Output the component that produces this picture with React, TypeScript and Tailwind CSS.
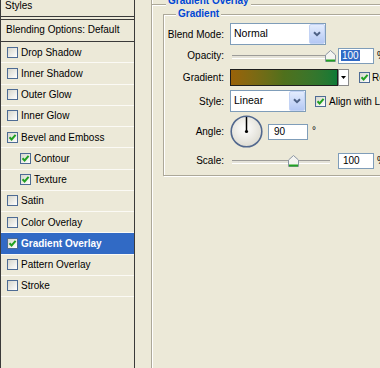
const items = [
  { name: "Drop Shadow", on: false, sub: false },
  { name: "Inner Shadow", on: false, sub: false },
  { name: "Outer Glow", on: false, sub: false },
  { name: "Inner Glow", on: false, sub: false },
  { name: "Bevel and Emboss", on: true, sub: false },
  { name: "Contour", on: true, sub: true },
  { name: "Texture", on: true, sub: true },
  { name: "Satin", on: false, sub: false },
  { name: "Color Overlay", on: false, sub: false },
  { name: "Gradient Overlay", on: true, sub: false, active: true },
  { name: "Pattern Overlay", on: false, sub: false },
  { name: "Stroke", on: false, sub: false },
];

function Check({ on }: { on: boolean }) {
  return (
    <span className="w-[11px] h-[11px] shrink-0 border border-[#4d6b94] bg-linear-to-br from-[#d6d6cc] to-white flex items-center justify-center">
      {on && (
        <svg width="9" height="9" viewBox="0 0 9 9">
          <path d="M1.5 4.2 L3.6 6.4 L7.6 1.8" stroke="#21a121" strokeWidth="2" fill="none" />
        </svg>
      )}
    </span>
  );
}

function Label({ children }: { children: React.ReactNode }) {
  return <div className="w-[60px] shrink-0 text-right mr-[6px]">{children}</div>;
}

function Select({ text, w }: { text: string; w: string }) {
  return (
    <div className={`${w} h-[22px] border border-[#7f9db9] bg-white flex items-center`}>
      <span className="flex-1 pl-[3px] text-[10.5px]">{text}</span>
      <span className="w-[16px] h-[20px] mr-[0px] rounded-[2px] border border-[#c3d3f5] bg-linear-to-b from-[#e3ecfd] to-[#b4c8f4] flex items-center justify-center">
        <svg width="8" height="6" viewBox="0 0 8 6">
          <path d="M1 1.2 L4 4.2 L7 1.2" stroke="#4d6185" strokeWidth="2" fill="none" />
        </svg>
      </span>
    </div>
  );
}

function Slider({ pos }: { pos: string }) {
  return (
    <div className="relative w-[106px] h-[12px] shrink-0">
      <div className="mt-[5px] ml-[2px] w-[98px] h-[4px] border-t border-[#9d9c99] border-b border-b-white bg-[#e4e2d8]" />
      <svg className={`absolute top-0 ${pos}`} width="11" height="12" viewBox="0 0 11 12">
        <path d="M0.5 5 L5.5 0.5 L10.5 5 L10.5 11.5 L0.5 11.5 Z" fill="#f4f4f0" stroke="#8a95a3" />
        <rect x="1" y="9.5" width="9" height="2" fill="#21a121" />
      </svg>
    </div>
  );
}

function Field({ children, w }: { children: React.ReactNode; w: string }) {
  return (
    <div className={`${w} h-[16px] shrink-0 border border-[#7f9db9] bg-white pl-[2px] leading-[14px]`}>
      {children}
    </div>
  );
}

export default function App() {
  return (
    <div className="w-[380px] h-[368px] overflow-hidden flex bg-[#ece9d8] text-[10px] text-black font-['Liberation_Sans',Arial,sans-serif]">
      <div className="w-[135px] shrink-0 h-full border-x border-[#3a3a3a] flex flex-col">
        <div className="h-[17px] shrink-0 border-b border-[#3a3a3a] pl-[4px] leading-[12px]">Styles</div>
        <div className="h-[23px] shrink-0 mt-[2px] border-y border-[#3a3a3a] pl-[5px] leading-[19px]">
          Blending Options: Default
        </div>
        {items.map((it) => (
          <div
            key={it.name}
            className={`h-[21.25px] shrink-0 border-b border-[#fbfaf5] flex items-center gap-[3px] ${
              it.sub ? "pl-[19px]" : "pl-[6px]"
            } ${it.active ? "bg-[#316ac5] text-white font-bold" : ""}`}
          >
            <Check on={it.on} />
            <span>{it.name}</span>
          </div>
        ))}
      </div>

      <div className="flex-1 pl-[16px] overflow-hidden">
        <div className="h-full border-l border-[#aca899] shadow-[inset_1px_0_0_#fff] pt-[4px]">
          <div className="relative h-full border-t border-[#aca899] shadow-[inset_0_1px_0_#fff]">
            <span className="absolute left-[14px] top-[-10px] px-[2px] bg-[#ece9d8] font-bold text-[#0046d5] leading-[12px] whitespace-nowrap">
              Gradient Overlay
            </span>
            <div className="relative ml-[11px] mt-[9px] w-[240px] border border-[#aca899] shadow-[inset_1px_1px_0_#fff,1px_1px_0_#fff] pt-[8px] pb-[4px] whitespace-nowrap">
              <span className="absolute left-[12px] top-[-7px] px-[2px] bg-[#ece9d8] font-bold text-[#0046d5] leading-[12px]">
                Gradient
              </span>

              <div className="flex items-center h-[22px]">
                <Label>Blend Mode:</Label>
                <Select text="Normal" w="w-[96px]" />
              </div>

              <div className="flex items-center h-[21px]">
                <Label>Opacity:</Label>
                <Slider pos="left-[95px]" />
                <div className="ml-[2px]">
                  <Field w="w-[36px]">
                    <span className="bg-[#316ac5] text-white px-[1px]">100</span>
                  </Field>
                </div>
                <span className="ml-[3px]">%</span>
              </div>

              <div className="flex items-center h-[23px]">
                <Label>Gradient:</Label>
                <div className="flex h-[17px] shrink-0">
                  <div className="w-[108px] h-full border border-[#1e1e1e] bg-linear-to-r from-[#9a6208] via-[#4f701c] to-[#0b7a36]" />
                  <div className="w-[11px] h-full border border-[#8a8a8a] bg-white flex items-center justify-center">
                    <svg width="5" height="3" viewBox="0 0 5 3">
                      <path d="M0 0 L5 0 L2.5 3 Z" fill="#000" />
                    </svg>
                  </div>
                </div>
                <span className="ml-[10px]">
                  <Check on={true} />
                </span>
                <span className="ml-[2px]">Reverse</span>
              </div>

              <div className="flex items-center h-[24px]">
                <Label>Style:</Label>
                <Select text="Linear" w="w-[76px]" />
                <span className="ml-[9px]">
                  <Check on={true} />
                </span>
                <span className="ml-[3px]">Align with Layer</span>
              </div>

              <div className="flex items-center h-[37px]">
                <Label>Angle:</Label>
                <svg width="33" height="33" viewBox="0 0 33 33" className="shrink-0">
                  <defs>
                    <radialGradient id="dialfill" cx="0.45" cy="0.4" r="0.6">
                      <stop offset="0" stopColor="#ffffff" />
                      <stop offset="1" stopColor="#dedcd2" />
                    </radialGradient>
                  </defs>
                  <circle cx="16.5" cy="16.5" r="15.3" fill="url(#dialfill)" stroke="#52688e" strokeWidth="1.6" />
                  <line x1="16.5" y1="16.5" x2="16.5" y2="2" stroke="#000" strokeWidth="1.5" />
                  <circle cx="16.5" cy="16.5" r="1.6" fill="#000" />
                </svg>
                <div className="ml-[5px]">
                  <Field w="w-[40px]">
                    <span className="pl-[3px]">90</span>
                  </Field>
                </div>
                <span className="ml-[4px] self-start mt-[12px] leading-[12px]">°</span>
              </div>

              <div className="flex items-center h-[21px]">
                <Label>Scale:</Label>
                <Slider pos="left-[58px]" />
                <div className="ml-[2px]">
                  <Field w="w-[36px]">
                    <span className="pl-[2px]">100</span>
                  </Field>
                </div>
                <span className="ml-[3px]">%</span>
              </div>
            </div>
          </div>
        </div>
      </div>
    </div>
  );
}
